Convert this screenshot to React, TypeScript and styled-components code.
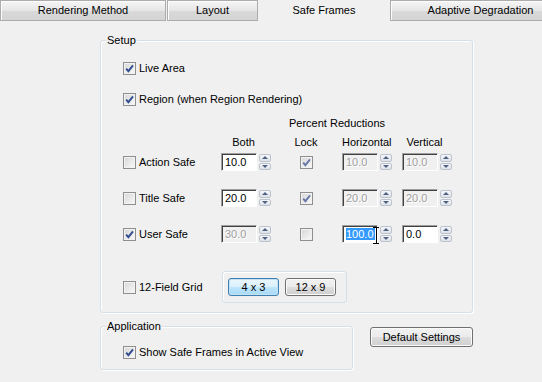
import React from 'react';
import styled, { createGlobalStyle } from 'styled-components';

const GlobalStyle = createGlobalStyle`
  html, body {
    margin: 0;
    padding: 0;
    background: #f0f0f0;
  }
  body {
    font-family: "Liberation Sans", Arial, sans-serif;
    font-size: 11px;
    line-height: 13px;
    color: #000;
  }
`;

const Window = styled.div`
  width: 542px;
  height: 382px;
  overflow: hidden;
  background: #f0f0f0;
`;

const TabBar = styled.div`
  display: flex;
  height: 21px;
  white-space: nowrap;
`;

const Tab = styled.div<{ $width: number; $gap?: number; $active?: boolean }>`
  flex: none;
  width: ${props => props.$width}px;
  margin-left: ${props => props.$gap || 0}px;
  box-sizing: border-box;
  height: 21px;
  line-height: 19px;
  text-align: center;
  border: 1px solid ${props => props.$active ? 'transparent' : '#acacac'};
  background: ${props => props.$active ? '#f0f0f0' : 'linear-gradient(#f5f5f5, #e6e6e6 50%, #d9d9d9 51%, #d4d4d4)'};
  box-shadow: ${props => props.$active ? 'none' : 'inset 1px 1px 0 #fcfcfc'};
`;

const Content = styled.div`
  padding-left: 100px;
  margin-top: 13px;
`;

const Group = styled.fieldset<{ $width: number; $top: number; $bottom: number }>`
  margin: 0;
  min-width: 0;
  width: ${props => props.$width}px;
  box-sizing: border-box;
  padding: ${props => props.$top}px 0 ${props => props.$bottom}px 5px;
  border: 1px solid #d5dfe5;
  border-radius: 3px;
  box-shadow: inset 1px 1px 0 #fff, 1px 1px 0 #fff;
`;

const Legend = styled.legend`
  padding: 0 1px;
  line-height: 13px;
  background: #f0f0f0;
`;

const Inner = styled.div`
  padding-left: 17px;
`;

const CheckRow = styled.label<{ $top?: number }>`
  display: flex;
  align-items: center;
  gap: 3px;
  height: 13px;
  margin-top: ${props => props.$top || 0}px;
  white-space: nowrap;
`;

const Box = styled.span`
  flex: none;
  display: flex;
  align-items: center;
  justify-content: center;
  width: 13px;
  height: 13px;
  box-sizing: border-box;
  border: 1px solid #8f8f8f;
  background: linear-gradient(135deg, #d6d6d6, #fafafa);
  box-shadow: inset 0 0 0 1px #f2f2f2;
`;

const Cols = styled.div<{ $top: number; $height?: number }>`
  display: grid;
  grid-template-columns: 98px 49px 72px 60px 50px;
  align-items: center;
  height: ${props => props.$height || 18}px;
  margin-top: ${props => props.$top}px;
`;

const Caption = styled.div`
  grid-column: 3 / span 3;
  padding-left: 19px;
  white-space: nowrap;
`;

const HeadCell = styled.div<{ $col: number; $full?: boolean }>`
  grid-column: ${props => props.$col};
  width: ${props => props.$full ? 'auto' : '49px'};
  padding-right: ${props => props.$full ? 0 : 4}px;
  box-sizing: border-box;
  text-align: center;
  white-space: nowrap;
`;

const LockCell = styled.div`
  display: flex;
  justify-content: center;
`;

const SpinField = styled.div`
  display: flex;
  align-items: flex-start;
  height: 18px;
`;

const Field = styled.span<{ $disabled?: boolean }>`
  position: relative;
  flex: none;
  display: flex;
  align-items: center;
  width: 36px;
  height: 18px;
  box-sizing: border-box;
  padding-left: 3px;
  border: 1px solid;
  border-color: #a0a0a0 #fff #fff #a0a0a0;
  box-shadow: inset 1px 1px 0 #404040;
  background: ${props => props.$disabled ? '#f0f0f0' : '#fff'};
  color: ${props => props.$disabled ? '#a0a0a0' : '#000'};
  text-shadow: ${props => props.$disabled ? '1px 1px 0 #fff' : 'none'};
`;

const Selected = styled.span`
  background: #3399ff;
  color: #fff;
  line-height: 12px;
  padding-right: 1px;
`;

const Cursor = styled.svg`
  position: absolute;
  left: 30px;
  top: 1px;
`;

const Spin = styled.span`
  flex: none;
  display: flex;
  flex-direction: column;
  gap: 1px;
  width: 12px;
  height: 16px;
  margin: 1px 0 0 2px;
`;

const SpinHalf = styled.span<{ $down?: boolean }>`
  flex: 1;
  display: flex;
  align-items: center;
  justify-content: center;
  border: 1px solid #bcc3cc;
  border-radius: 2px;
  background: linear-gradient(#f6f7f9, #dde2e8);
  &::after {
    content: '';
    border-left: 3px solid transparent;
    border-right: 3px solid transparent;
    ${props => props.$down ? 'border-top: 3px solid #4d6185;' : 'border-bottom: 3px solid #4d6185;'}
  }
`;

const Segments = styled.div`
  grid-column: 2 / span 4;
  margin-left: 1px;
  display: flex;
  gap: 6px;
  width: 125px;
  box-sizing: border-box;
  padding: 6px 9px 6px 5px;
  border: 1px solid #d5dfe5;
  border-radius: 3px;
  box-shadow: inset 1px 1px 0 #fff;
`;

const SegButton = styled.div<{ $on?: boolean }>`
  width: 51px;
  height: 18px;
  box-sizing: border-box;
  line-height: 16px;
  text-align: center;
  border: 1px solid ${props => props.$on ? '#3c7fb1' : '#707070'};
  border-radius: 3px;
  background: ${props => props.$on
    ? 'linear-gradient(#eaf6fd, #d9f0fc 50%, #bee6fd 51%, #a7d9f5)'
    : 'linear-gradient(#f2f2f2, #ebebeb 50%, #dddddd 51%, #cfcfcf)'};
  box-shadow: inset 0 0 0 1px ${props => props.$on ? '#c5e2f5' : '#fcfcfc'};
`;

const BottomRow = styled.div`
  display: flex;
  align-items: flex-start;
  margin-top: 7px;
`;

const Button = styled.div`
  margin: 7px 0 0 17px;
  width: 103px;
  height: 20px;
  box-sizing: border-box;
  line-height: 18px;
  text-align: center;
  border: 1px solid #707070;
  border-radius: 3px;
  background: linear-gradient(#f2f2f2, #ebebeb 50%, #dddddd 51%, #cfcfcf);
  box-shadow: inset 0 0 0 1px #fbfbfb;
`;

const Check: React.FC<{ on?: boolean; muted?: boolean }> = ({ on, muted }) => (
  <Box>
    {on && (
      <svg width="9" height="9" viewBox="0 0 9 9">
        <path
          d="M1.2 4.6 L3.4 7.2 L8 1.4"
          fill="none"
          stroke={muted ? '#6878a6' : '#2f4c8f'}
          strokeWidth="1.9"
        />
      </svg>
    )}
  </Box>
);

const Spinner: React.FC<{ value: string; disabled?: boolean; selected?: boolean }> = ({ value, disabled, selected }) => (
  <SpinField>
    <Field $disabled={disabled}>
      {selected ? <Selected>{value}</Selected> : value}
      {selected && (
        <Cursor width="7" height="17" viewBox="0 0 7 17">
          <path d="M0 0.5h6M3.5 1v15M0 16.5h6" stroke="#000" strokeWidth="1" fill="none" />
        </Cursor>
      )}
    </Field>
    <Spin>
      <SpinHalf />
      <SpinHalf $down />
    </Spin>
  </SpinField>
);

type SafeRow = {
  name: string;
  on: boolean;
  both: string;
  bothOff: boolean;
  lock: boolean;
  h: string;
  v: string;
  top: number;
};

const rows: Array<SafeRow> = [
  { name: 'Action Safe', on: false, both: '10.0', bothOff: false, lock: true, h: '10.0', v: '10.0', top: 4 },
  { name: 'Title Safe', on: false, both: '20.0', bothOff: false, lock: true, h: '20.0', v: '20.0', top: 18 },
  { name: 'User Safe', on: true, both: '30.0', bothOff: true, lock: false, h: '100.0', v: '0.0', top: 18 },
];

export default function App() {
  return (
    <Window>
      <GlobalStyle />
      <TabBar>
        <Tab $width={166}>Rendering Method</Tab>
        <Tab $width={91} $gap={1}>Layout</Tab>
        <Tab $width={132} $active>Safe Frames</Tab>
        <Tab $width={181}>Adaptive Degradation</Tab>
      </TabBar>
      <Content>
        <Group $width={373} $top={15} $bottom={9}>
          <Legend>Setup</Legend>
          <Inner>
            <CheckRow><Check on />Live Area</CheckRow>
            <CheckRow $top={18}><Check on />Region (when Region Rendering)</CheckRow>
            <Cols $top={11} $height={13}>
              <Caption>Percent Reductions</Caption>
            </Cols>
            <Cols $top={6} $height={13}>
              <HeadCell $col={2}>Both</HeadCell>
              <HeadCell $col={3} $full>Lock</HeadCell>
              <HeadCell $col={4}>Horizontal</HeadCell>
              <HeadCell $col={5}>Vertical</HeadCell>
            </Cols>
            {rows.map(row => (
              <Cols key={row.name} $top={row.top}>
                <CheckRow><Check on={row.on} />{row.name}</CheckRow>
                <Spinner value={row.both} disabled={row.bothOff} />
                <LockCell><Check on={row.lock} muted /></LockCell>
                <Spinner value={row.h} disabled={row.lock} selected={row.name === 'User Safe'} />
                <Spinner value={row.v} disabled={row.lock} />
              </Cols>
            ))}
            <Cols $top={28} $height={32}>
              <CheckRow><Check />12-Field Grid</CheckRow>
              <Segments>
                <SegButton $on>4 x 3</SegButton>
                <SegButton>12 x 9</SegButton>
              </Segments>
            </Cols>
          </Inner>
        </Group>
        <BottomRow>
          <Group $width={253} $top={13} $bottom={10}>
            <Legend>Application</Legend>
            <Inner>
              <CheckRow><Check on />Show Safe Frames in Active View</CheckRow>
            </Inner>
          </Group>
          <Button>Default Settings</Button>
        </BottomRow>
      </Content>
    </Window>
  );
}
